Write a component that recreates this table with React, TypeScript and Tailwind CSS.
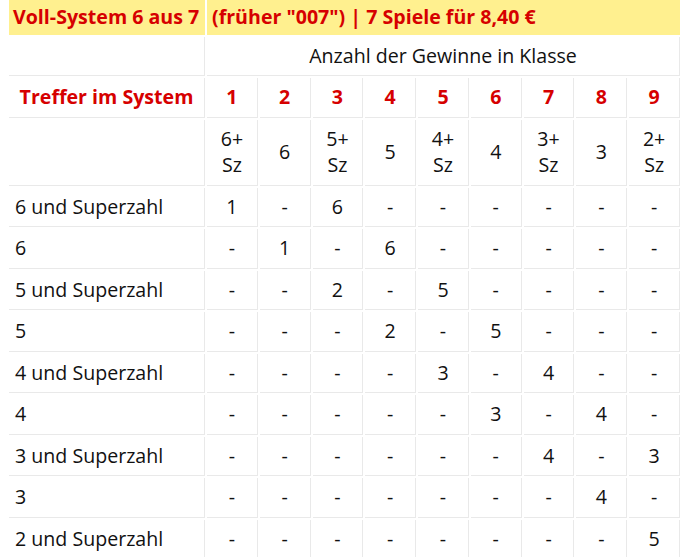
import React from 'react';

const ROWS: { label: string; values: string[] }[] = [
  { label: '6 und Superzahl', values: ['1', '-', '6', '-', '-', '-', '-', '-', '-'] },
  { label: '6', values: ['-', '1', '-', '6', '-', '-', '-', '-', '-'] },
  { label: '5 und Superzahl', values: ['-', '-', '2', '-', '5', '-', '-', '-', '-'] },
  { label: '5', values: ['-', '-', '-', '2', '-', '5', '-', '-', '-'] },
  { label: '4 und Superzahl', values: ['-', '-', '-', '-', '3', '-', '4', '-', '-'] },
  { label: '4', values: ['-', '-', '-', '-', '-', '3', '-', '4', '-'] },
  { label: '3 und Superzahl', values: ['-', '-', '-', '-', '-', '-', '4', '-', '3'] },
  { label: '3', values: ['-', '-', '-', '-', '-', '-', '-', '4', '-'] },
  { label: '2 und Superzahl', values: ['-', '-', '-', '-', '-', '-', '-', '-', '5'] },
];

const CLASSES: string[][] = [
  ['6+', 'Sz'], ['6'], ['5+', 'Sz'], ['5'], ['4+', 'Sz'], ['4'], ['3+', 'Sz'], ['3'], ['2+', 'Sz'],
];

const cell = 'border-r border-b border-[#e9e9e9] py-[6px] px-[5px] flex items-center';

export default function App() {
  return (
    <div
      className="w-[682px] h-[557px] overflow-hidden bg-white text-[19.6px] leading-[26.5px] text-[#111]"
      style={{ fontFamily: '"Open Sans", "Noto Sans", sans-serif' }}
    >
      <div className="grid grid-cols-[196px_repeat(9,minmax(0,1fr))] gap-[2px] pl-[9px] pr-[2px]">
        {/* Title */}
        <div className="bg-[#fff08f] px-[4px] py-[4px] font-bold text-[#d60000] whitespace-nowrap">
          Voll-System 6 aus 7
        </div>
        <div className="col-span-9 bg-[#fff08f] px-[5px] py-[4px] font-bold text-[#d60000] whitespace-nowrap">
          (früher "007") | 7 Spiele für 8,40 €
        </div>

        {/* Anzahl */}
        <div className={cell}></div>
        <div className={`${cell} col-span-9 justify-center`}>Anzahl der Gewinne in Klasse</div>

        {/* Treffer im System */}
        <div className={`${cell} justify-center font-bold text-[#d60000] py-[4px]`}>Treffer im System</div>
        {CLASSES.map((_, i) => (
          <div key={i} className={`${cell} justify-center font-bold text-[#d60000] py-[4px]`}>
            {i + 1}
          </div>
        ))}

        {/* Klassen */}
        <div className={cell}></div>
        {CLASSES.map((lines, i) => (
          <div key={i} className={`${cell} flex-col justify-center text-center`}>
            {lines.map((l) => (
              <span key={l}>{l}</span>
            ))}
          </div>
        ))}

        {/* Data */}
        {ROWS.map((row) => (
          <React.Fragment key={row.label}>
            <div className={`${cell} px-[6px] whitespace-nowrap`}>{row.label}</div>
            {row.values.map((v, i) => (
              <div key={i} className={`${cell} justify-center`}>
                {v}
              </div>
            ))}
          </React.Fragment>
        ))}
      </div>
    </div>
  );
}
